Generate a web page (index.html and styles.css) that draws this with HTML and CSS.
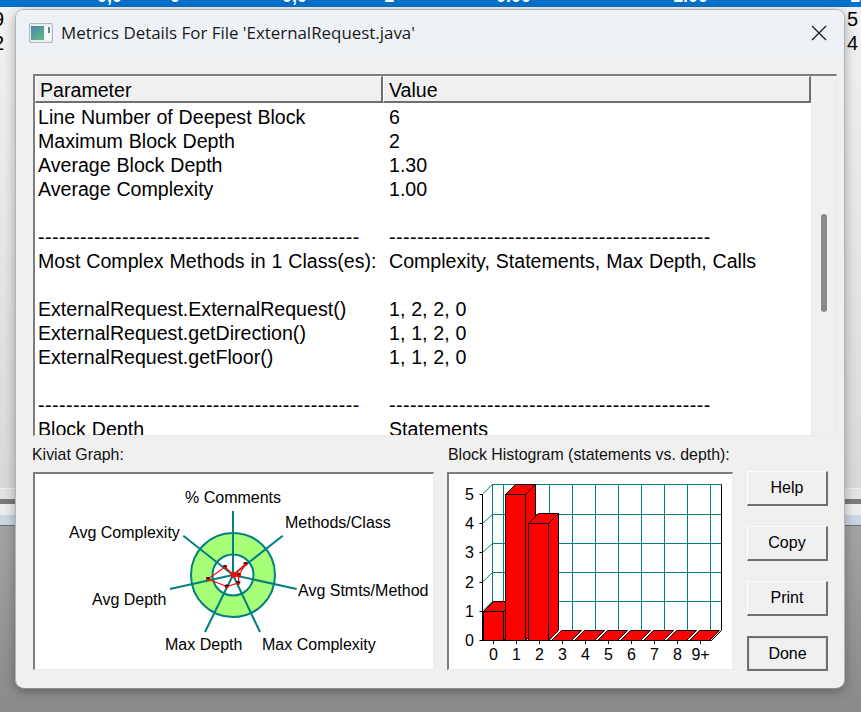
FILE: index.html
```html
<!DOCTYPE html>
<html lang="en">
<head>
<meta charset="utf-8">
<title>Metrics Details</title>
<link rel="stylesheet" href="styles.css">
</head>
<body>
<div class="desktop">
  <div class="backdrop">
    <div class="strip-blue">
      <span class="cut c1">0,0</span><span class="cut c2">0</span><span class="cut c3">0,0</span><span class="cut c4">1</span><span class="cut c5">0.00</span><span class="cut c6">1.00</span><span class="cut c7">1</span>
    </div>
    <div class="strip-light">
      <div class="nums"><span>9</span><span>2</span></div>
      <div class="nums"><span>5</span><span>4</span></div>
    </div>
    <div class="strip-hair"></div>
    <div class="strip-pale"></div>
    <div class="strip-dark"></div>
    <div class="strip-pale2"></div>
    <div class="strip-blueish"></div>
    <div class="strip-line"></div>
    <div class="strip-grey"></div>
  </div>

  <section class="window">
    <header class="titlebar">
      <svg class="app-icon" width="24" height="20" viewBox="0 0 24 20">
        <defs>
          <linearGradient id="iconfill" x1="0" y1="0" x2="0.6" y2="1">
            <stop offset="0" stop-color="#4a86a8"/>
            <stop offset="1" stop-color="#5fb48c"/>
          </linearGradient>
        </defs>
        <rect x="0.5" y="0.5" width="23" height="19" rx="1.5" fill="#e9edf1" stroke="#b4b8bd"/>
        <rect x="2" y="3" width="13" height="14" fill="url(#iconfill)"/>
        <rect x="16" y="3" width="6" height="14" fill="#f7f9fb"/>
        <rect x="19" y="4" width="2" height="6" fill="#4f8f7c"/>
      </svg>
      <h1 class="title">Metrics Details For File 'ExternalRequest.java'</h1>
      <svg class="close" width="16" height="16" viewBox="0 0 16 16">
        <path d="M1 1 L15 15 M15 1 L1 15" stroke="#1c1c1c" stroke-width="1.3" fill="none"/>
      </svg>
    </header>

    <div class="content">
      <div class="listbox">
        <div class="list-main">
          <div class="list-head">
            <div class="head-cell head-param">Parameter</div>
            <div class="head-cell head-value">Value</div>
          </div>
          <div class="rows">
            <div class="row"><span>Line Number of Deepest Block</span><span>6</span></div>
            <div class="row"><span>Maximum Block Depth</span><span>2</span></div>
            <div class="row"><span>Average Block Depth</span><span>1.30</span></div>
            <div class="row"><span>Average Complexity</span><span>1.00</span></div>
            <div class="row"></div>
            <div class="row row-dash"><span>----------------------------------------------</span><span>----------------------------------------------</span></div>
            <div class="row"><span>Most Complex Methods in 1 Class(es):</span><span>Complexity, Statements, Max Depth, Calls</span></div>
            <div class="row"></div>
            <div class="row"><span>ExternalRequest.ExternalRequest()</span><span>1, 2, 2, 0</span></div>
            <div class="row"><span>ExternalRequest.getDirection()</span><span>1, 1, 2, 0</span></div>
            <div class="row"><span>ExternalRequest.getFloor()</span><span>1, 1, 2, 0</span></div>
            <div class="row"></div>
            <div class="row row-dash"><span>----------------------------------------------</span><span>----------------------------------------------</span></div>
            <div class="row"><span>Block Depth</span><span>Statements</span></div>
          </div>
        </div>
        <div class="scrollbar"><div class="thumb"></div></div>
      </div>

      <div class="lower">
        <div class="pane pane-kiviat">
          <div class="pane-label">Kiviat Graph:</div>
          <div class="sunken">
            <svg class="chart" width="398" height="195" viewBox="35 474 398 195">
              <circle cx="233" cy="575" r="31" fill="none" stroke="#a8ff78" stroke-width="22"/>
              <circle cx="233" cy="575" r="42" fill="none" stroke="#008080" stroke-width="2"/>
              <circle cx="233" cy="575" r="20.5" fill="none" stroke="#008080" stroke-width="2"/>
              <path class="spokes" d="M233 575 L233 511 M233 575 L282.7 535.7 M233 575 L296.7 589 M233 575 L260 632 M233 575 L205 632 M233 575 L170 589 M233 575 L183.3 535.7"/>
              <polygon class="plot" points="233.5,575 245.5,564 239,575 238.3,583 226.7,586.5 208,579 225,567"/>
              <g class="dots">
                <circle cx="233.5" cy="575" r="3"/><circle cx="238.5" cy="575" r="2.5"/><circle cx="245.5" cy="564" r="2"/>
                <circle cx="238.3" cy="583" r="2"/><circle cx="226.7" cy="586.5" r="2"/><circle cx="208" cy="579" r="2"/><circle cx="225" cy="567" r="2"/>
              </g>
              <path class="marks" d="M243.5 563 h4 M245.5 562 v2 M236.3 582 h4 M238.3 581 v2 M224.7 585.5 h4 M226.7 584.5 v2 M206 578 h4 M208 577 v2 M223 566 h4 M225 565 v2 M237 574 h3"/>
              <g class="chart-text">
                <text x="185" y="503">% Comments</text>
                <text x="285" y="528">Methods/Class</text>
                <text x="69" y="538">Avg Complexity</text>
                <text x="298" y="596">Avg Stmts/Method</text>
                <text x="92" y="605">Avg Depth</text>
                <text x="165" y="650">Max Depth</text>
                <text x="262" y="650">Max Complexity</text>
              </g>
            </svg>
          </div>
        </div>

        <div class="pane pane-hist">
          <div class="pane-label">Block Histogram (statements vs. depth):</div>
          <div class="sunken">
            <svg class="chart" width="283" height="195" viewBox="449 474 283 195">
              <g class="grid">
                <path d="M492.5 484.5 H721.5 M492.5 514.5 H721.5 M492.5 543.5 H721.5 M492.5 572.5 H721.5 M492.5 601.5 H721.5"/>
                <path d="M492.5 484.5 V630 M503.5 484.5 V630 M526.5 484.5 V630 M549.5 484.5 V630 M572.5 484.5 V630 M595.5 484.5 V630 M618.5 484.5 V630 M641.5 484.5 V630 M664.5 484.5 V630 M687.5 484.5 V630 M710.5 484.5 V630"/>
                <path d="M482.5 494 L492.5 484.5 M482.5 523.5 L492.5 514.5 M482.5 552.5 L492.5 543.5 M482.5 582 L492.5 572.5 M482.5 611 L492.5 601.5"/>
              </g>
              <path class="axis" d="M482.5 494 V640.5 H711.5 L721.5 630.5 V484.5 M482.5 640.5 L492.5 630.5"/>
              <path class="axis" d="M479.5 494.5 H482.5 M479.5 523.5 H482.5 M479.5 552.5 H482.5 M479.5 582.5 H482.5 M479.5 611.5 H482.5 M479.5 640.5 H482.5 M493.5 640.5 V644 M516.5 640.5 V644 M539.5 640.5 V644 M562.5 640.5 V644 M585.5 640.5 V644 M608.5 640.5 V644 M631.5 640.5 V644 M654.5 640.5 V644 M677.5 640.5 V644 M700.5 640.5 V644"/>
              <g class="bars">
                <path d="M483.5 640.5 V611.5 L493.5 601.5 H513.5 V630.5 L503.5 640.5 Z"/>
                <path class="edge" d="M483.5 611.5 H503.5 L513.5 601.5 M503.5 611.5 V640.5"/>
                <path d="M505.5 640.5 V494.5 L515.5 484.5 H535.5 V630.5 L525.5 640.5 Z"/>
                <path class="edge" d="M505.5 494.5 H525.5 L535.5 484.5 M525.5 494.5 V640.5"/>
                <path d="M528.5 640.5 V523.5 L538.5 513.5 H558.5 V630.5 L548.5 640.5 Z"/>
                <path class="edge" d="M528.5 523.5 H548.5 L558.5 513.5 M548.5 523.5 V640.5"/>
                <path d="M551.5 640.5 L561.5 630.5 H581.5 L571.5 640.5 Z"/>
                <path d="M574.5 640.5 L584.5 630.5 H604.5 L594.5 640.5 Z"/>
                <path d="M597.5 640.5 L607.5 630.5 H627.5 L617.5 640.5 Z"/>
                <path d="M620.5 640.5 L630.5 630.5 H650.5 L640.5 640.5 Z"/>
                <path d="M643.5 640.5 L653.5 630.5 H673.5 L663.5 640.5 Z"/>
                <path d="M666.5 640.5 L676.5 630.5 H696.5 L686.5 640.5 Z"/>
                <path d="M689.5 640.5 L699.5 630.5 H719.5 L709.5 640.5 Z"/>
              </g>
              <g class="hist-y">
                <text x="474" y="500">5</text><text x="474" y="529">4</text><text x="474" y="558">3</text><text x="474" y="588">2</text><text x="474" y="617">1</text><text x="474" y="646">0</text>
              </g>
              <g class="hist-x">
                <text x="493.5" y="660">0</text><text x="516.5" y="660">1</text><text x="539.5" y="660">2</text><text x="562.5" y="660">3</text><text x="585.5" y="660">4</text><text x="608.5" y="660">5</text><text x="631.5" y="660">6</text><text x="654.5" y="660">7</text><text x="677.5" y="660">8</text><text x="700.5" y="660">9+</text>
              </g>
            </svg>
          </div>
        </div>

        <div class="buttons">
          <button class="btn">Help</button>
          <button class="btn">Copy</button>
          <button class="btn">Print</button>
          <button class="btn btn-default"><span>Done</span></button>
        </div>
      </div>
    </div>
  </section>
</div>
</body>
</html>
```

FILE: styles.css
```css
* { box-sizing: border-box; }
html, body { margin: 0; padding: 0; }
body { width: 861px; height: 712px; overflow: hidden; font-family: "Liberation Sans", Arial, sans-serif; color: #000; }

.desktop { position: relative; width: 861px; height: 712px; overflow: hidden; }

.backdrop { display: flex; flex-direction: column; height: 712px; }
.strip-blue { position: relative; height: 7px; background: #0072c9; overflow: hidden; flex: none; }
.cut { position: absolute; top: -13px; color: #fff; font-size: 18px; line-height: 18px; font-weight: 700; white-space: nowrap; }
.c1 { left: 97px; } .c2 { left: 170px; } .c3 { left: 282px; } .c4 { left: 384px; } .c5 { left: 496px; } .c6 { left: 673px; } .c7 { left: 850px; }
.strip-light { height: 481px; flex: none; display: flex; justify-content: space-between; background: linear-gradient(180deg, #f2f2f2 0%, #d9d9d9 100%); }
.nums { display: flex; flex-direction: column; width: 16px; font-size: 20px; line-height: 24px; }
.nums:first-child { margin-left: -7px; }
.nums:last-child { width: 14px; }
.strip-hair { height: 1px; background: #efefef; flex: none; }
.strip-pale { height: 10px; background: #e3e3e3; flex: none; }
.strip-dark { height: 5px; background: #7a7a7a; flex: none; }
.strip-pale2 { height: 11px; background: #ececec; flex: none; }
.strip-blueish { height: 10px; background: #c9d6e4; flex: none; }
.strip-line { height: 1px; background: #6d6d6d; flex: none; }
.strip-grey { flex: 1; background: linear-gradient(180deg, #a3a3a3 0%, #8a8a8a 100%); }

.window { position: absolute; left: 15px; top: 9px; width: 830px; height: 680px; background: #f0f0f0; border: 1px solid #b3b3b3; border-bottom-color: #8c8c8c; border-radius: 9px; overflow: hidden; display: flex; flex-direction: column; box-shadow: 0 3px 12px rgba(0, 0, 0, 0.3); }

.titlebar { height: 45px; flex: none; background: #eef2f7; display: flex; align-items: center; padding: 0 17px 0 13px; }
.app-icon { flex: none; margin-right: 8px; }
.title { flex: 1; margin: 0; font-family: "Open Sans", sans-serif; font-weight: 400; font-size: 16.9px; color: #1a1a1a; white-space: nowrap; }
.close { flex: none; }

.content { flex: 1; display: flex; flex-direction: column; padding: 19px 0 0 17px; min-height: 0; }

.listbox { width: 804px; height: 362px; flex: none; display: flex; border: 1px solid; border-color: #7d7d7d #ebebeb #ebebeb #7d7d7d; border-width: 2px 1px 1px 2px; background: #f0f0f0; overflow: hidden; }
.list-main { width: 776px; flex: none; background: #fff; display: flex; flex-direction: column; }
.list-head { display: flex; height: 27px; flex: none; font-size: 19.6px; word-spacing: 0.4px; }
.head-cell { background: #f0f0f0; line-height: 26px; border: 1px solid; border-color: #fdfdfd #6f6f6f #6f6f6f #fdfdfd; border-width: 1px 2px 2px 1px; white-space: nowrap; }
.head-param { width: 348px; padding-left: 4px; }
.head-value { flex: 1; padding-left: 5px; }
.rows { padding: 2px 0 0 3px; overflow: hidden; }
.row { height: 24px; display: flex; font-size: 19.6px; line-height: 24px; white-space: nowrap; word-spacing: 0.4px; }
.row span:first-child { width: 351px; flex: none; }
.row-dash { letter-spacing: 0.47px; }
.scrollbar { flex: 1; position: relative; display: flex; justify-content: flex-end; padding: 138px 9px 0 0; }
.thumb { width: 6px; height: 98px; background: #8a8a8a; border-radius: 3px; }

.lower { display: flex; align-items: flex-start; margin-top: 10px; }
.pane { display: flex; flex-direction: column; }
.pane-label { height: 26px; font-size: 15.9px; line-height: 18px; color: #111; white-space: nowrap; }
.pane-kiviat { margin-right: 13px; }
.pane-kiviat .pane-label { margin-left: -1px; }
.pane-hist { margin-right: 14px; }
.pane-hist .pane-label { padding-left: 1px; }
.pane-kiviat .sunken { width: 401px; }
.pane-hist .sunken { width: 286px; }
.sunken { height: 198px; background: #fff; border: 1px solid; border-width: 2px 1px 1px 2px; border-color: #7d7d7d #ebebeb #ebebeb #7d7d7d; overflow: hidden; }
.chart { display: block; }
.chart-text text { font-size: 16px; fill: #000; }
.spokes { stroke: #008080; stroke-width: 2; fill: none; }
.plot { fill: none; stroke: #ff0000; stroke-width: 1.1; }
.dots circle { fill: #ff0000; }
.marks { stroke: #000; stroke-width: 1; fill: none; }
.grid path { stroke: #008080; stroke-width: 1; fill: none; }
.axis { stroke: #000; stroke-width: 1; fill: none; }
.bars path { fill: #ff0000; stroke: #000; stroke-width: 1; }
.bars path.edge { fill: none; }
.hist-y text { font-size: 16px; text-anchor: end; fill: #000; }
.hist-x text { font-size: 16px; text-anchor: middle; fill: #000; }

.buttons { display: flex; flex-direction: column; gap: 20px; padding-top: 25px; }
.btn { width: 81px; height: 35px; padding: 0; font-family: "Liberation Sans", Arial, sans-serif; font-size: 16px; color: #000; background: #f0f0f0; border: 1px solid; border-color: #fdfdfd #6f6f6f #6f6f6f #fdfdfd; border-width: 1px 2px 2px 1px; border-radius: 0; }
.btn-default { border: 2px solid #6f6f6f; }
.btn-default span { display: flex; align-items: center; justify-content: center; height: 100%; border: 1px solid #e2e2e2; }
```
